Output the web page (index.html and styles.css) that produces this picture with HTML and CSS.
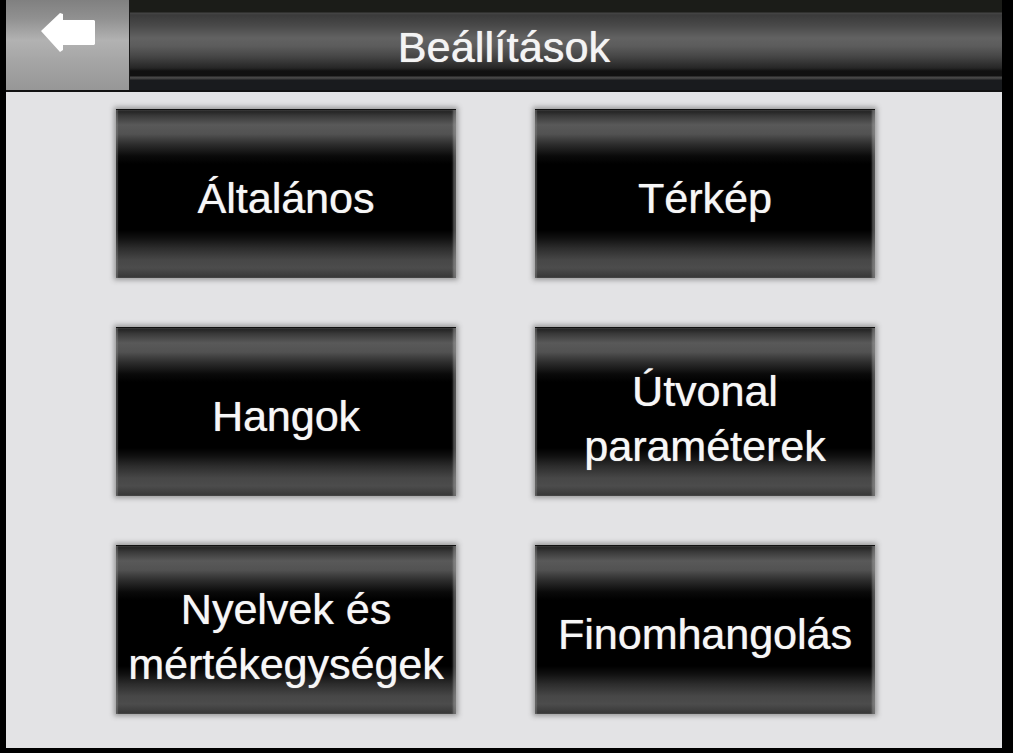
FILE: index.html
```html
<!DOCTYPE html>
<html lang="hu">
<head>
  <meta charset="UTF-8" />
  <meta name="viewport" content="width=device-width, initial-scale=1.0"/>
  <title>Beállítások</title>
  <link rel="stylesheet" href="styles.css">
</head>
<body>
  <div class="screen">

    <!-- Top bar -->
    <div class="topbar">
      <button class="back-btn" aria-label="Vissza">
        <svg width="58" height="42" viewBox="0 0 58 42">
          <path d="M1 19 L20 1 L23 2 L23 8 L54 8 L55 9 L55 32 L54 33 L23 33 L23 38 L20 40 Z" fill="#fff"/>
        </svg>
      </button>
      <div class="title-bar">
        <h1>Beállítások</h1>
      </div>
    </div>

    <!-- Menu buttons -->
    <div class="content">
      <div class="menu-grid">
        <button class="menu-btn">Általános</button>
        <button class="menu-btn">Térkép</button>
        <button class="menu-btn">Hangok</button>
        <button class="menu-btn two-line">Útvonal<br>paraméterek</button>
        <button class="menu-btn two-line">Nyelvek és<br>mértékegységek</button>
        <button class="menu-btn">Finomhangolás</button>
      </div>
    </div>

  </div>
</body>
</html>
```

FILE: styles.css
```css
/* —— Base —— */
* { box-sizing: border-box; margin: 0; padding: 0; }
html, body { width: 1013px; height: 753px; overflow: hidden; background: #000; }
body { font-family: "Liberation Sans", Arial, sans-serif; color: #fff; }

/* —— Screen frame —— */
.screen {
  width: 1013px;
  height: 753px;
  padding: 0 11px 5px 6px;
  display: flex;
  flex-direction: column;
}

/* —— Top bar —— */
.topbar {
  display: flex;
  height: 92px;
  border-bottom: 2px solid #121212;
}
.back-btn {
  width: 124px;
  border: none;
  border-right: 1px solid #1a1a1a;
  background: linear-gradient(to bottom, #808080 0%, #909090 20%, #b2b2b2 45%, #a4a4a4 70%, #979797 100%);
  display: flex;
  align-items: center;
  justify-content: center;
  padding: 0 0 24px 2px;
  cursor: pointer;
}

/* title is centred on the whole screen, not just the bar */
.title-bar {
  flex: 1;
  display: flex;
  align-items: center;
  justify-content: center;
  padding: 4px 124px 0 0;
  background: linear-gradient(to bottom,
    #1b1c18 0px, #1b1c18 12px,
    #464646 13px, #3a3a3a 15px,
    #4a4a4a 26px, #626262 38px, #5c5c5c 46px,
    #474747 56px, #262626 68px,
    #111 71px, #111 76px,
    #4a4a4a 77px, #3c3c3c 79px,
    #191b1e 80px, #191b1e 90px);
}
.title-bar h1 {
  font-size: 43px;
  font-weight: normal;
  letter-spacing: 0.2px;
  color: #f4f4f4;
  text-shadow: 0 0 1px rgba(255,255,255,0.7), 0.5px 0 0 rgba(255,255,255,0.5);
}

/* —— Content area —— */
.content {
  flex: 1;
  background: #e3e3e5;
  padding: 17px 0 0 110px;
}
.menu-grid {
  display: grid;
  grid-template-columns: 340px 340px;
  grid-template-rows: repeat(3, 169px);
  column-gap: 79px;
  row-gap: 49px;
}

/* —— Menu buttons —— */
.menu-btn {
  border: none;
  border-top: 1px solid #111;
  color: #f7f7f7;
  font-family: "Liberation Sans", Arial, sans-serif;
  font-size: 43px;
  line-height: 55px;
  padding-top: 8px;
  text-align: center;
  cursor: pointer;
  background: linear-gradient(to bottom,
    #1e1e1e 0px, #3a3a3a 6px, #595959 15px, #525252 24px,
    #2e2e2e 34px, #0a0a0a 46px, #000 54px,
    #000 120px, #101010 128px, #2c2c2c 138px,
    #474747 150px, #4c4c4c 158px, #3a3a3a 166px, #2a2a2a 169px);
  box-shadow:
    inset 2px 0 1px rgba(150,150,150,0.35),
    inset -3px 0 2px rgba(180,180,180,0.45),
    0 0 5px 2px rgba(60,60,60,0.45);
  text-shadow: 0 0 1px rgba(255,255,255,0.6), 0.5px 0 0 rgba(255,255,255,0.4);
}
.menu-btn.two-line { padding-top: 14px; }
```
